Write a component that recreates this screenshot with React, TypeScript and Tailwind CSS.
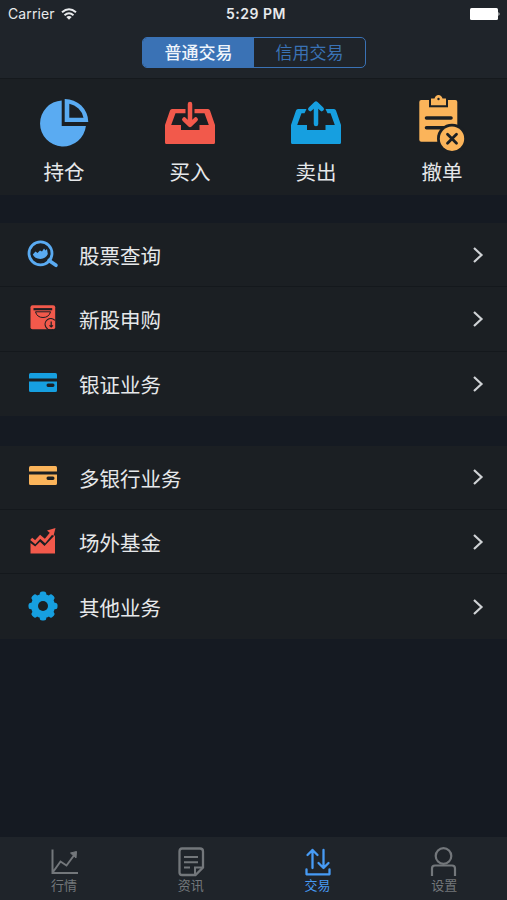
import React from "react";
import { clsx } from "clsx";

const PieIcon = () => (
  <svg viewBox="0 0 56 56" className="w-14 h-14" fill="#5aabf2">
    <path d="M25.7 6.5A23 23 0 1 0 49.9 32H25.7z" />
    <path
      fillRule="evenodd"
      d="M28.7 5A23.3 23.3 0 0 1 52.3 28H28.7zM33.3 9.8V23.7H47.5A18 18 0 0 0 33.3 9.8z"
    />
  </svg>
);

const BuyIcon = () => (
  <svg viewBox="0 0 56 56" className="w-14 h-14" fill="#f2594b">
    <path d="M10 15H23.5V19.2H13.5L9.2 31H19V36H37.5V31H46.8L42.5 19.2H32.5V15H46Q47.5 15 48 16.5L53 31V48.5Q53 50 51.5 50H4.5Q3 50 3 48.5V31L8 16.5Q8.5 15 10 15z" />
    <path
      d="M28 10V30M22.300 25.500L28 31L33.700 25.500"
      fill="none"
      stroke="#f2594b"
      strokeWidth="4.500"
      strokeLinecap="round"
      strokeLinejoin="round"
    />
  </svg>
);

const SellIcon = () => (
  <svg viewBox="0 0 56 56" className="w-14 h-14" fill="#169fe0">
    <path d="M10 15H18.5L16.5 19.200H13.500L9.200 31H19V36H37.500V31H46.800L42.500 19.200H39.500L37.500 15H46Q47.500 15 48 16.500L53 31V48.500Q53 50 51.500 50H4.500Q3 50 3 48.500V31L8 16.500Q8.500 15 10 15z" />
    <path
      d="M28 30V10M22.300 15L28 9.500L33.700 15"
      fill="none"
      stroke="#169fe0"
      strokeWidth="4.500"
      strokeLinecap="round"
      strokeLinejoin="round"
    />
  </svg>
);

const CancelIcon = () => (
  <svg viewBox="0 0 56 56" className="w-14 h-14 overflow-visible" fill="none">
    <rect x="5.300" y="6" width="38" height="41.700" rx="2" fill="#fbb45a" />
    <path d="M15 5H34V13.300H15z" fill="#1b1f23" />
    <path d="M17 4.500H20.500Q21.500 1 24.500 1T28.500 4.500H32V11.300H17z" fill="#fbb45a" />
    <circle cx="24.500" cy="5" r="1.200" fill="#1b1f23" />
    <path d="M12.500 24H37M12.500 33.800H30" stroke="#1b1f23" strokeWidth="3.600" strokeLinecap="round" />
    <circle cx="38" cy="44.700" r="15" fill="#1b1f23" />
    <circle cx="38" cy="44.700" r="12.200" fill="#fbb45a" />
    <path
      d="M33.500 40.200L42.500 49.200M42.500 40.200L33.500 49.200"
      stroke="#1b1f23"
      strokeWidth="2.800"
      strokeLinecap="round"
    />
  </svg>
);

const SearchIcon = () => (
  <svg viewBox="0 0 32 32" className="w-8 h-8" fill="none">
    <circle cx="13.500" cy="14.300" r="11.500" stroke="#5aabf2" strokeWidth="2.800" />
    <path d="M22 21.500L29 26.300" stroke="#5aabf2" strokeWidth="3.600" strokeLinecap="round" />
    <path
      d="M5.800 15.500L8.500 12.500L10.500 14L13 11.500L15 12.500L17 9.500L18.500 11.500L20 10L20.800 15Q19 19.500 13.300 20Q7.500 19.500 5.800 15.500z"
      fill="#5aabf2"
    />
  </svg>
);

const BagIcon = () => (
  <svg viewBox="0 0 32 32" className="w-8 h-8" fill="none">
    <rect x="3.500" y="2.300" width="24.700" height="24" rx="2" fill="#f2594b" />
    <path d="M6.500 6.200H25.200" stroke="#1b1f23" strokeWidth="2.200" />
    <path d="M8.500 8.800Q10 14.500 16 14.500T23.500 8.800z" stroke="#1b1f23" />
    <path d="M28 17.400A5.700 5.700 0 1 0 26 26.500" stroke="#1b1f23" strokeWidth="1.200" />
    <path d="M24.200 18.500V24M22.500 22.300L24.200 24L25.900 22.300" stroke="#1b1f23" strokeWidth="1.200" />
  </svg>
);

const CardIcon = ({ fill }: { fill: string }) => (
  <svg viewBox="0 0 32 32" className="w-8 h-8" fill={fill}>
    <path d="M3.500 5H28.500Q30 5 30 6.500V10.500H2V6.500Q2 5 3.500 5z" />
    <path
      fillRule="evenodd"
      d="M2 13.500H30V22.500Q30 24 28.500 24H3.500Q2 24 2 22.500zM21 15.500Q19.500 15.500 19.500 17.200T21 18.900H26Q27.500 18.900 27.500 17.200T26 15.500z"
    />
  </svg>
);

const FundIcon = () => (
  <svg viewBox="0 0 32 32" className="w-8 h-8" fill="#f2594b">
    <path d="M3.500 17L8.200 20.500L13 15.800L17.500 20L28 9V27.500H3.500z" />
    <path d="M4.200 12.800L8.200 16.200L13.200 10.800L18 15L25 6.500" fill="none" stroke="#f2594b" strokeWidth="3" />
    <path d="M20 4.500L28.500 2L26.500 10z" />
  </svg>
);

const GearIcon = () => (
  <svg viewBox="0 0 32 32" className="w-8 h-8" fill="#169fe0">
    {[0, 45, 90, 135].map((angle) => (
      <rect
        key={angle}
        x="12.700"
        y="0.500"
        width="6.600"
        height="29"
        rx="2.500"
        transform={`rotate(${angle} 16 15)`}
      />
    ))}
    <circle cx="16" cy="15" r="12" />
    <circle cx="16" cy="15" r="5" fill="#1b1f23" />
  </svg>
);

const QuotesIcon = () => (
  <svg viewBox="0 0 32 32" className="w-8 h-8" fill="none" stroke="currentColor" strokeWidth="2">
    <path d="M4.500 3.500V27H30M5 26L12.500 15.500L18.500 19.500L27 8" />
    <path d="M22.500 7L28.500 5.500L28 12z" fill="currentColor" strokeWidth="1" />
  </svg>
);

const NewsIcon = () => (
  <svg viewBox="0 0 32 32" className="w-8 h-8" fill="none" stroke="currentColor" strokeWidth="2">
    <path
      d="M7 2.500H25Q28 2.500 28 5.500V21.500L20.500 29H7Q4.500 29 4.500 26.500V5.500Q4.500 2.500 7 2.500z"
      strokeWidth="2.300"
    />
    <path d="M9 11H23M9 16.200H23M9 21.400H15M20 28.500V21.400H27" />
  </svg>
);

const TradeIcon = () => (
  <svg
    viewBox="0 0 32 32"
    className="w-8 h-8"
    fill="none"
    stroke="currentColor"
    strokeWidth="2.300"
    strokeLinecap="round"
    strokeLinejoin="round"
  >
    <path d="M10.500 22V4M5.500 9L10.500 4L15.500 9M21.500 4V22M16.500 17L21.500 22L26.500 17" />
    <path d="M4.500 23.500V28.300H27.500V23.500" />
  </svg>
);

const ProfileIcon = () => (
  <svg viewBox="0 0 32 32" className="w-8 h-8" fill="none" stroke="currentColor" strokeWidth="2.200">
    <circle cx="15.500" cy="10" r="7.800" />
    <path d="M4 30V22.500Q4 19.500 7 19.500H24Q27 19.500 27 22.500V30" />
  </svg>
);

type MenuItem = { title: string; icon: React.ReactNode; active?: boolean };

const actions: MenuItem[] = [
  { title: "持仓", icon: <PieIcon /> },
  { title: "买入", icon: <BuyIcon /> },
  { title: "卖出", icon: <SellIcon /> },
  { title: "撤单", icon: <CancelIcon /> },
];

const stockMenu: MenuItem[] = [
  { title: "股票查询", icon: <SearchIcon /> },
  { title: "新股申购", icon: <BagIcon /> },
  { title: "银证业务", icon: <CardIcon fill="#169fe0" /> },
];

const otherMenu: MenuItem[] = [
  { title: "多银行业务", icon: <CardIcon fill="#fbb45a" /> },
  { title: "场外基金", icon: <FundIcon /> },
  { title: "其他业务", icon: <GearIcon /> },
];

const tabs: MenuItem[] = [
  { title: "行情", icon: <QuotesIcon /> },
  { title: "资讯", icon: <NewsIcon /> },
  { title: "交易", icon: <TradeIcon />, active: true },
  { title: "设置", icon: <ProfileIcon /> },
];

const MenuGroup = ({ items }: { items: MenuItem[] }) => (
  <ul className="bg-[#1b1f23] divide-y divide-[#14181c]">
    {items.map((item) => (
      <li key={item.title} className="flex items-center h-[64.4px] pl-[27px] pr-[23px]">
        {item.icon}
        <span className="pt-[5px] ml-5 text-[20.5px] leading-none text-[#e6e8ea]">{item.title}</span>
        <svg viewBox="0 0 12 18" className="w-3 h-[18px] ml-auto" fill="none">
          <path d="M2 2L9.500 9L2 16" stroke="#cfd2d5" strokeWidth="2.200" />
        </svg>
      </li>
    ))}
  </ul>
);

const StatusBar = () => (
  <div className="grid grid-cols-3 items-center h-7 px-2 font-['Inter',sans-serif] text-[#e8eaec]">
    <div className="flex items-center gap-1.5">
      <span className="text-[14px] leading-none tracking-[0.1px]">Carrier</span>
      <svg viewBox="0 0 16 12" className="w-4 h-3" fill="none" stroke="currentColor" strokeWidth="2">
        <path d="M1 4.300Q8 -1.800 15 4.300M3.500 7.200Q8 3.300 12.500 7.200" />
        <path d="M5.300 9L8 11.700L10.700 9Q8 7 5.300 9z" fill="currentColor" stroke="none" />
      </svg>
    </div>
    <span className="ml-[5px] text-[14px] leading-none tracking-[0.5px] font-semibold text-center">
      5:29 PM
    </span>
    <svg viewBox="0 0 31 12" className="w-[31px] h-3 ml-auto mr-[-2px]" fill="#fff">
      <rect width="28" height="12" rx="1.500" />
      <path d="M28.500 4Q30.500 6 28.500 8z" />
    </svg>
  </div>
);

const App: React.FC = () => {
  return (
    <div className="flex flex-col h-[900px] w-[507px] overflow-hidden bg-[#151a22] font-['Inter','Noto_Sans_CJK_SC',sans-serif]">
      <header className="h-[79px] shrink-0 bg-[#1f242a] border-b border-[#15191d]">
        <StatusBar />
        <div className="flex w-[224px] h-[31px] mt-[9px] ml-[142px] overflow-hidden rounded-[5px] border border-[#3a72b5] text-[17px] leading-none">
          <button className="w-1/2 pt-0.5 bg-[#3a72b5] text-[#eef4fb] font-medium">普通交易</button>
          <button className="w-1/2 pt-0.5 text-[#3a72b5]">信用交易</button>
        </div>
      </header>

      <main className="flex flex-col grow">
        <section className="h-[116px] pt-[15px] bg-[#1b1f23]">
          <div className="grid grid-cols-4 w-[504px] ml-px">
            {actions.map((action) => (
              <button key={action.title} className="flex flex-col items-center">
                {action.icon}
                <span className="mt-[13px] text-[20.5px] leading-none text-[#e6e8ea]">
                  {action.title}
                </span>
              </button>
            ))}
          </div>
        </section>
        <div className="flex flex-col gap-[29.5px] mt-7">
          <MenuGroup items={stockMenu} />
          <MenuGroup items={otherMenu} />
        </div>
      </main>

      <nav className="grid grid-cols-4 h-[63px] shrink-0 bg-[#1f242a]">
        {tabs.map((tab) => (
          <button
            key={tab.title}
            className={clsx(
              "flex flex-col items-center pt-[9px] pl-[1.5px] text-[13px] leading-none",
              tab.active ? "text-[#479bf5]" : "text-[#73777b]"
            )}
          >
            {tab.icon}
            <span className="mt-px">{tab.title}</span>
          </button>
        ))}
      </nav>
    </div>
  );
};

export default App;
